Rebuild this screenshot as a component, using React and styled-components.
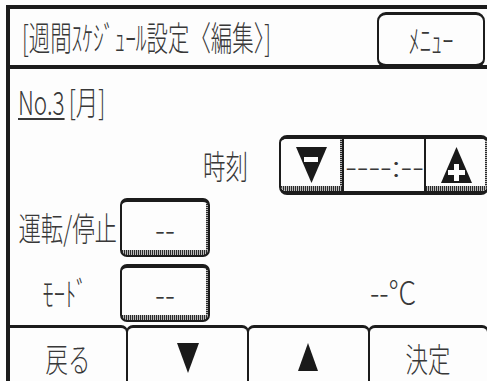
import React from 'react'
import styled, { createGlobalStyle } from 'styled-components'

const INK = '#1c1c1c'
const TEXT = '#383838'

const GlobalStyle = createGlobalStyle`
  html, body {
    margin: 0;
    padding: 0;
    background: #fdfdfd;
    overflow: hidden;
  }
  body {
    font-family: 'Noto Sans CJK JP', 'Noto Sans', sans-serif;
    font-weight: 300;
    color: ${TEXT};
  }
`

// dithered shading used on the bottom/right edge of raised keys
const raised = `
  background:
    repeating-linear-gradient(90deg, #2a2a2a 0 1px, #b8b8b8 1px 2px) bottom / 100% 5px no-repeat,
    repeating-linear-gradient(0deg, #2a2a2a 0 1px, #b8b8b8 1px 2px) right / 2px 100% no-repeat,
    #fdfdfd;
`

const Frame = styled.div`
  margin: 5px 0 0 6px;
  width: 483px;
  height: 385px;
  box-sizing: border-box;
  border-top: 4px solid ${INK};
  border-left: 4px solid ${INK};
  display: flex;
  flex-direction: column;
`

const Lcd = styled.span`
  display: inline-block;
  font-size: ${p => p.$size || 33}px;
  line-height: 1;
  white-space: nowrap;
  transform: scaleX(${p => p.$sx || 0.68});
  transform-origin: ${p => p.$origin || 'center'};
`

const TitleBar = styled.div`
  height: 60px;
  box-sizing: border-box;
  border-bottom: 4px solid ${INK};
  display: flex;
  align-items: center;
`

const Title = styled.div`
  width: 300px;
  flex-shrink: 0;
  padding-left: 12px;
  padding-top: 2px;
`

const MenuButton = styled.div`
  margin-left: auto;
  margin-right: 4px;
  margin-bottom: -3px;
  align-self: flex-end;
  width: 108px;
  height: 56px;
  box-sizing: border-box;
  border: 2px solid ${INK};
  border-top-width: 3px;
  border-bottom-width: 4px;
  border-radius: 9px;
  background: #fdfdfd;
  display: flex;
  align-items: center;
  justify-content: center;
`

const Row = styled.div`
  height: ${p => p.$h}px;
  display: flex;
  align-items: center;
  justify-content: ${p => p.$justify || 'flex-start'};
`

const NumberLabel = styled.div`
  padding-left: 8px;
`

const Underlined = styled.span`
  text-decoration: underline;
  text-decoration-thickness: 2px;
  text-underline-offset: 3px;
  margin-right: 6px;
`

const TimeLabel = styled.div`
  margin-right: 31px;
  display: flex;
  justify-content: flex-end;
`

const TimeControl = styled.div`
  width: 210px;
  height: 60px;
  box-sizing: border-box;
  border: 2px solid ${INK};
  border-top-width: 4px;
  border-bottom-width: 4px;
  border-radius: 8px;
  display: flex;
  overflow: hidden;
`

const StepKey = styled.div`
  width: 61px;
  display: flex;
  align-items: center;
  justify-content: center;
  ${raised}
`

const TimeField = styled.div`
  flex: 1;
  border-left: 2px solid ${INK};
  border-right: 2px solid ${INK};
  display: flex;
  align-items: center;
  justify-content: center;
  background: #fdfdfd;
`

const LabelCell = styled.div`
  width: 110px;
  box-sizing: border-box;
  padding-right: ${p => (p.$align === 'flex-end' ? 3 : 0)}px;
  display: flex;
  justify-content: ${p => p.$align};
`

const ValueKey = styled.div`
  width: 90px;
  height: ${p => p.$h}px;
  box-sizing: border-box;
  border: 2px solid ${INK};
  border-top-width: 4px;
  border-radius: 7px;
  display: flex;
  align-items: center;
  justify-content: center;
  ${raised}
`

const Reading = styled.div`
  margin-left: 160px;
`

const BottomBar = styled.div`
  flex: 1;
  display: flex;
`

const Tab = styled.div`
  width: ${p => p.$w}px;
  box-sizing: border-box;
  border-top: 3px solid ${INK};
  border-left: 2px solid ${INK};
  border-right: 2px solid ${INK};
  border-radius: 7px 7px 0 0;
  margin-left: -2px;
  display: flex;
  align-items: center;
  justify-content: center;
  padding-bottom: 2px;

  &:first-child {
    margin-left: 0;
    border-left: none;
    border-top-left-radius: 0;
  }
`

const DownStep = () => (
  <svg width="31" height="36" viewBox="0 0 31 36">
    <polygon points="0,0 31,0 15.5,36" fill="#1a1a1a" />
    <rect x="8" y="10" width="14" height="5" fill="#fdfdfd" />
  </svg>
)

const UpStep = () => (
  <svg width="31" height="36" viewBox="0 0 31 36">
    <polygon points="15.5,0 31,36 0,36" fill="#1a1a1a" />
    <rect x="7" y="23" width="17" height="5" fill="#fdfdfd" />
    <rect x="13" y="17" width="5" height="17" fill="#fdfdfd" />
  </svg>
)

const Arrow = ({ up }) => (
  <svg width="22" height="30" viewBox="0 0 22 30">
    <polygon
      points={up ? '11,0 21,28 1,28' : '0,0 22,0 11,30'}
      fill="#1a1a1a"
    />
  </svg>
)

const App = () => {
  return (
    <React.Fragment>
      <GlobalStyle />
      <Frame>
        <TitleBar>
          <Title>
            <Lcd $size={34} $sx={0.63} $origin="left center">
              [週間ｽｹｼﾞｭｰﾙ設定〈編集〉]
            </Lcd>
          </Title>
          <MenuButton>
            <Lcd>ﾒﾆｭｰ</Lcd>
          </MenuButton>
        </TitleBar>

        <Row $h={66}>
          <NumberLabel>
            <Lcd $origin="left center">
              <Underlined>No.3</Underlined>[月]
            </Lcd>
          </NumberLabel>
        </Row>

        <Row $h={60} $justify="flex-end">
          <TimeLabel>
            <Lcd $origin="right center">時刻</Lcd>
          </TimeLabel>
          <TimeControl>
            <StepKey>
              <DownStep />
            </StepKey>
            <TimeField>
              <Lcd $size={28} $sx={1.25}>----:--</Lcd>
            </TimeField>
            <StepKey>
              <UpStep />
            </StepKey>
          </TimeControl>
        </Row>

        <Row $h={65}>
          <LabelCell $align="flex-end">
            <Lcd $origin="right center">運転/停止</Lcd>
          </LabelCell>
          <ValueKey $h={59}>
            <Lcd $sx={0.9}>--</Lcd>
          </ValueKey>
        </Row>

        <Row $h={65}>
          <LabelCell $align="center">
            <Lcd>ﾓｰﾄﾞ</Lcd>
          </LabelCell>
          <ValueKey $h={58}>
            <Lcd $sx={0.9}>--</Lcd>
          </ValueKey>
          <Reading>
            <Lcd $sx={0.85} $origin="left center">--°C</Lcd>
          </Reading>
        </Row>

        <BottomBar>
          <Tab $w={119}>
            <Lcd>戻る</Lcd>
          </Tab>
          <Tab $w={124}>
            <Arrow />
          </Tab>
          <Tab $w={124}>
            <Arrow up />
          </Tab>
          <Tab $w={122}>
            <Lcd>決定</Lcd>
          </Tab>
        </BottomBar>
      </Frame>
    </React.Fragment>
  )
}

export default App
